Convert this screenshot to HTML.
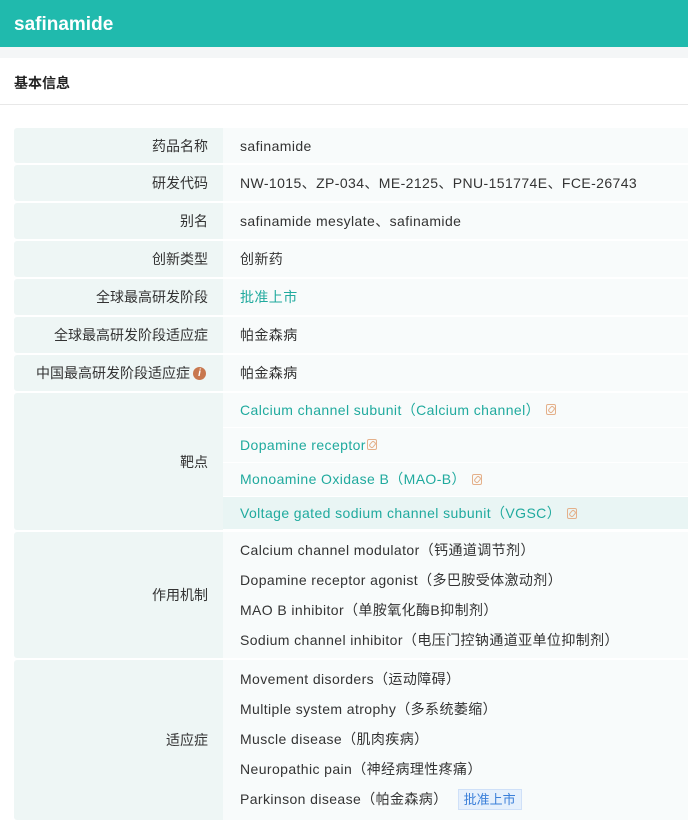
<!DOCTYPE html>
<html><head><meta charset="utf-8"><style>
*{margin:0;padding:0;box-sizing:border-box}
body{width:688px;height:813px;overflow:hidden;background:#fff;font-family:"Liberation Sans","Noto Sans CJK SC",sans-serif;font-size:14px;color:#333}
.top{height:47px;background:#20baad;color:#fff;font-weight:bold;font-size:19px;padding:14px 14px 0}
.gap{height:11px;background:#f4f6f7}
.sec{height:47px;border-bottom:1px solid #e8e8e8;padding:15px 14px;font-weight:bold;font-size:14px;color:#222}
.tbl{position:absolute;left:14px;top:128px;width:674px}
.row{display:flex;margin-bottom:2px}
.lab{width:209px;background:#eef6f5;text-align:right;padding-right:15px;display:flex;align-items:center;justify-content:flex-end;border-radius:3px 0 0 3px}
.val{flex:1;background:#f8fbfb;padding-left:17px;display:flex;flex-direction:column;justify-content:center;letter-spacing:0.4px}
.link{color:#20aa9e}
.sub{height:35px;display:flex;align-items:center;padding-left:17px;border-bottom:1px solid #fff}
.ic{display:inline-block;width:10px;height:11px;border:1.5px solid #e4b08a;border-radius:2px;margin-left:6px;vertical-align:-1px;position:relative}
.ic:after{content:"";position:absolute;left:2px;top:1px;width:3px;height:5px;border:1px solid #e4b08a;border-radius:2px;transform:rotate(40deg)}
.i{display:inline-block;width:13px;height:13px;border-radius:50%;background:#c8774e;color:#fff;font-size:10px;font-style:italic;font-weight:bold;text-align:center;line-height:13px;margin-left:3px}
.tag{display:inline-block;background:#e6f0fc;border:1px solid #cfe0f8;color:#3b7fd9;padding:0 5px;margin-left:10px;font-size:13px;line-height:19px;letter-spacing:0}
.ln{line-height:30px}
</style></head><body>
<div class="top">safinamide</div>
<div class="gap"></div>
<div class="sec">基本信息</div>
<div class="tbl">
<div class="row" style="height:35px"><div class="lab">药品名称</div><div class="val">safinamide</div></div>
<div class="row" style="height:36px"><div class="lab">研发代码</div><div class="val">NW-1015、ZP-034、ME-2125、PNU-151774E、FCE-26743</div></div>
<div class="row" style="height:36px"><div class="lab">别名</div><div class="val">safinamide mesylate、safinamide</div></div>
<div class="row" style="height:36px"><div class="lab">创新类型</div><div class="val">创新药</div></div>
<div class="row" style="height:36px"><div class="lab">全球最高研发阶段</div><div class="val link">批准上市</div></div>
<div class="row" style="height:36px"><div class="lab">全球最高研发阶段适应症</div><div class="val">帕金森病</div></div>
<div class="row" style="height:36px"><div class="lab" style="padding-right:17px">中国最高研发阶段适应症<span class="i">i</span></div><div class="val">帕金森病</div></div>
<div class="row" style="height:137px"><div class="lab">靶点</div><div class="val" style="padding-left:0;justify-content:flex-start">
<div class="sub link">Calcium channel subunit（Calcium channel）<span class="ic"></span></div>
<div class="sub link">Dopamine receptor<span class="ic" style="margin-left:1px"></span></div>
<div class="sub link">Monoamine Oxidase B（MAO-B）<span class="ic"></span></div>
<div class="sub link" style="background:#e9f5f4;height:33px">Voltage gated sodium channel subunit（VGSC）<span class="ic"></span></div>
</div></div>
<div class="row" style="height:126px"><div class="lab">作用机制</div><div class="val">
<div class="ln">Calcium channel modulator（钙通道调节剂）</div>
<div class="ln">Dopamine receptor agonist（多巴胺受体激动剂）</div>
<div class="ln">MAO B inhibitor（单胺氧化酶B抑制剂）</div>
<div class="ln">Sodium channel inhibitor（电压门控钠通道亚单位抑制剂）</div>
</div></div>
<div class="row" style="height:160px"><div class="lab">适应症</div><div class="val" style="justify-content:flex-start;padding-top:4px">
<div class="ln">Movement disorders（运动障碍）</div>
<div class="ln">Multiple system atrophy（多系统萎缩）</div>
<div class="ln">Muscle disease（肌肉疾病）</div>
<div class="ln">Neuropathic pain（神经病理性疼痛）</div>
<div class="ln">Parkinson disease（帕金森病）<span class="tag">批准上市</span></div>
</div></div>
</div>
</body></html>
